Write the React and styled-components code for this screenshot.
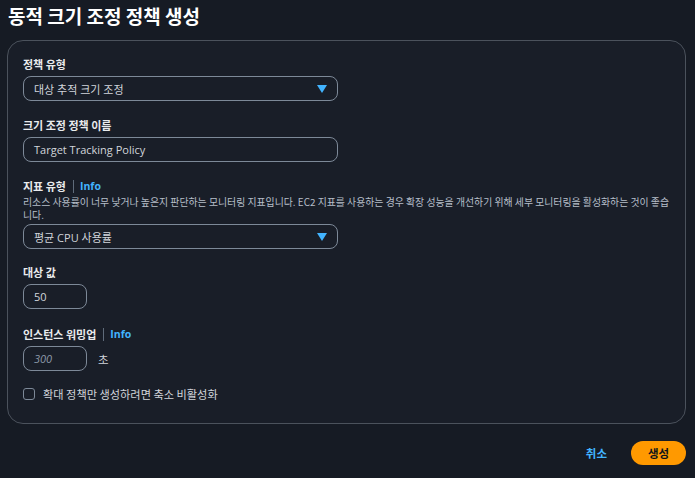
import React from 'react';
import styled, { createGlobalStyle } from 'styled-components';

const GlobalStyle = createGlobalStyle`
body {
    margin: 0;
    background: #161b24;
    font-family: "Open Sans", "Noto Sans CJK KR", sans-serif;
    color: #e9ebed;
}
`;

const Page = styled.div`
display: flex;
flex-direction: column;
padding: 2px 9px 0 7px;
width: 695px;
box-sizing: border-box;
`;

const Title = styled.h1`
margin: 0 0 10px 1px;
font-size: 19px;
font-weight: 700;
line-height: 28px;
color: #ffffff;
font-family: "Noto Sans CJK KR", sans-serif;
`;

const Card = styled.div`
border: 1px solid #4b525c;
border-radius: 16px;
background: #191e28;
padding: 16px 15px 21px;
display: flex;
flex-direction: column;
`;

const Field = styled.div`
display: flex;
flex-direction: column;
margin-bottom: ${p => p.gap || 17}px;
`;

const LabelRow = styled.div`
display: flex;
align-items: center;
height: 14px;
margin-bottom: 5px;
`;

const Label = styled.span`
font-family: "Noto Sans CJK KR", sans-serif;
font-size: 11px;
line-height: 14px;
font-weight: 700;
color: #e9ebed;
`;

const Divider = styled.span`
width: 1px;
height: 13px;
background: #5f6b7a;
margin: 0 6px 0 7px;
`;

const InfoLink = styled.span`
font-size: 10.5px;
line-height: 14px;
font-weight: 700;
color: #42b4ff;
`;

const Description = styled.div`
font-family: "Noto Sans CJK KR", sans-serif;
font-size: 9.9px;
line-height: 12.5px;
color: #b6bec9;
margin: -2px 0 3px;
`;

const Box = styled.div`
display: flex;
align-items: center;
justify-content: space-between;
box-sizing: border-box;
width: ${p => p.w || 315}px;
height: 25px;
border: 1px solid #7d8998;
border-radius: 8px;
padding: 0 10px 0 10px;
font-family: "Open Sans", "Noto Sans CJK KR", sans-serif;
font-size: 11px;
color: ${p => p.placeholder ? '#8d99a8' : '#d1d5db'};
font-style: ${p => p.placeholder ? 'italic' : 'normal'};
`;

const Arrow = styled.svg`
width: 10px;
height: 8px;
fill: #42b4ff;
`;

const Row = styled.div`
display: flex;
align-items: center;
gap: 11px;
`;

const Unit = styled.span`
font-family: "Noto Sans CJK KR", sans-serif;
font-size: 11.5px;
color: #d1d5db;
`;

const CheckRow = styled.label`
display: flex;
align-items: center;
gap: 8px;
height: 16px;
font-family: "Noto Sans CJK KR", sans-serif;
font-size: 11.2px;
color: #d1d5db;
`;

const CheckBox = styled.span`
width: 12px;
height: 12px;
border: 1px solid #7d8998;
border-radius: 3px;
box-sizing: border-box;
`;

const Footer = styled.div`
display: flex;
justify-content: flex-end;
align-items: center;
gap: 24px;
padding-top: 17px;
`;

const LinkButton = styled.span`
font-family: "Noto Sans CJK KR", sans-serif;
font-size: 11.5px;
font-weight: 700;
color: #42b4ff;
`;

const PrimaryButton = styled.span`
display: flex;
align-items: center;
justify-content: center;
width: 55px;
height: 24px;
border-radius: 12px;
background: #ff9900;
color: #0f141a;
font-family: "Noto Sans CJK KR", sans-serif;
font-size: 11.5px;
font-weight: 700;
`;

const SelectArrow = () => (
    <Arrow viewBox='0 0 10 8'>
        <path d='M0 0h10L5 8z' />
    </Arrow>
);

export default function App() {
    return (
        <Page>
            <GlobalStyle />
            <Title>동적 크기 조정 정책 생성</Title>
            <Card>
                <Field>
                    <LabelRow><Label>정책 유형</Label></LabelRow>
                    <Box>대상 추적 크기 조정<SelectArrow /></Box>
                </Field>
                <Field>
                    <LabelRow><Label>크기 조정 정책 이름</Label></LabelRow>
                    <Box>Target Tracking Policy</Box>
                </Field>
                <Field gap={16}>
                    <LabelRow>
                        <Label>지표 유형</Label>
                        <Divider />
                        <InfoLink>Info</InfoLink>
                    </LabelRow>
                    <Description>
                        리소스 사용률이 너무 낮거나 높은지 판단하는 모니터링 지표입니다. EC2 지표를 사용하는 경우 확장 성능을 개선하기 위해 세부 모니터링을 활성화하는 것이 좋습니다.
                    </Description>
                    <Box>평균 CPU 사용률<SelectArrow /></Box>
                </Field>
                <Field gap={18}>
                    <LabelRow><Label>대상 값</Label></LabelRow>
                    <Box w={64}>50</Box>
                </Field>
                <Field gap={15}>
                    <LabelRow>
                        <Label>인스턴스 워밍업</Label>
                        <Divider />
                        <InfoLink>Info</InfoLink>
                    </LabelRow>
                    <Row>
                        <Box w={64} placeholder>300</Box>
                        <Unit>초</Unit>
                    </Row>
                </Field>
                <CheckRow>
                    <CheckBox />
                    확대 정책만 생성하려면 축소 비활성화
                </CheckRow>
            </Card>
            <Footer>
                <LinkButton>취소</LinkButton>
                <PrimaryButton>생성</PrimaryButton>
            </Footer>
        </Page>
    );
}
